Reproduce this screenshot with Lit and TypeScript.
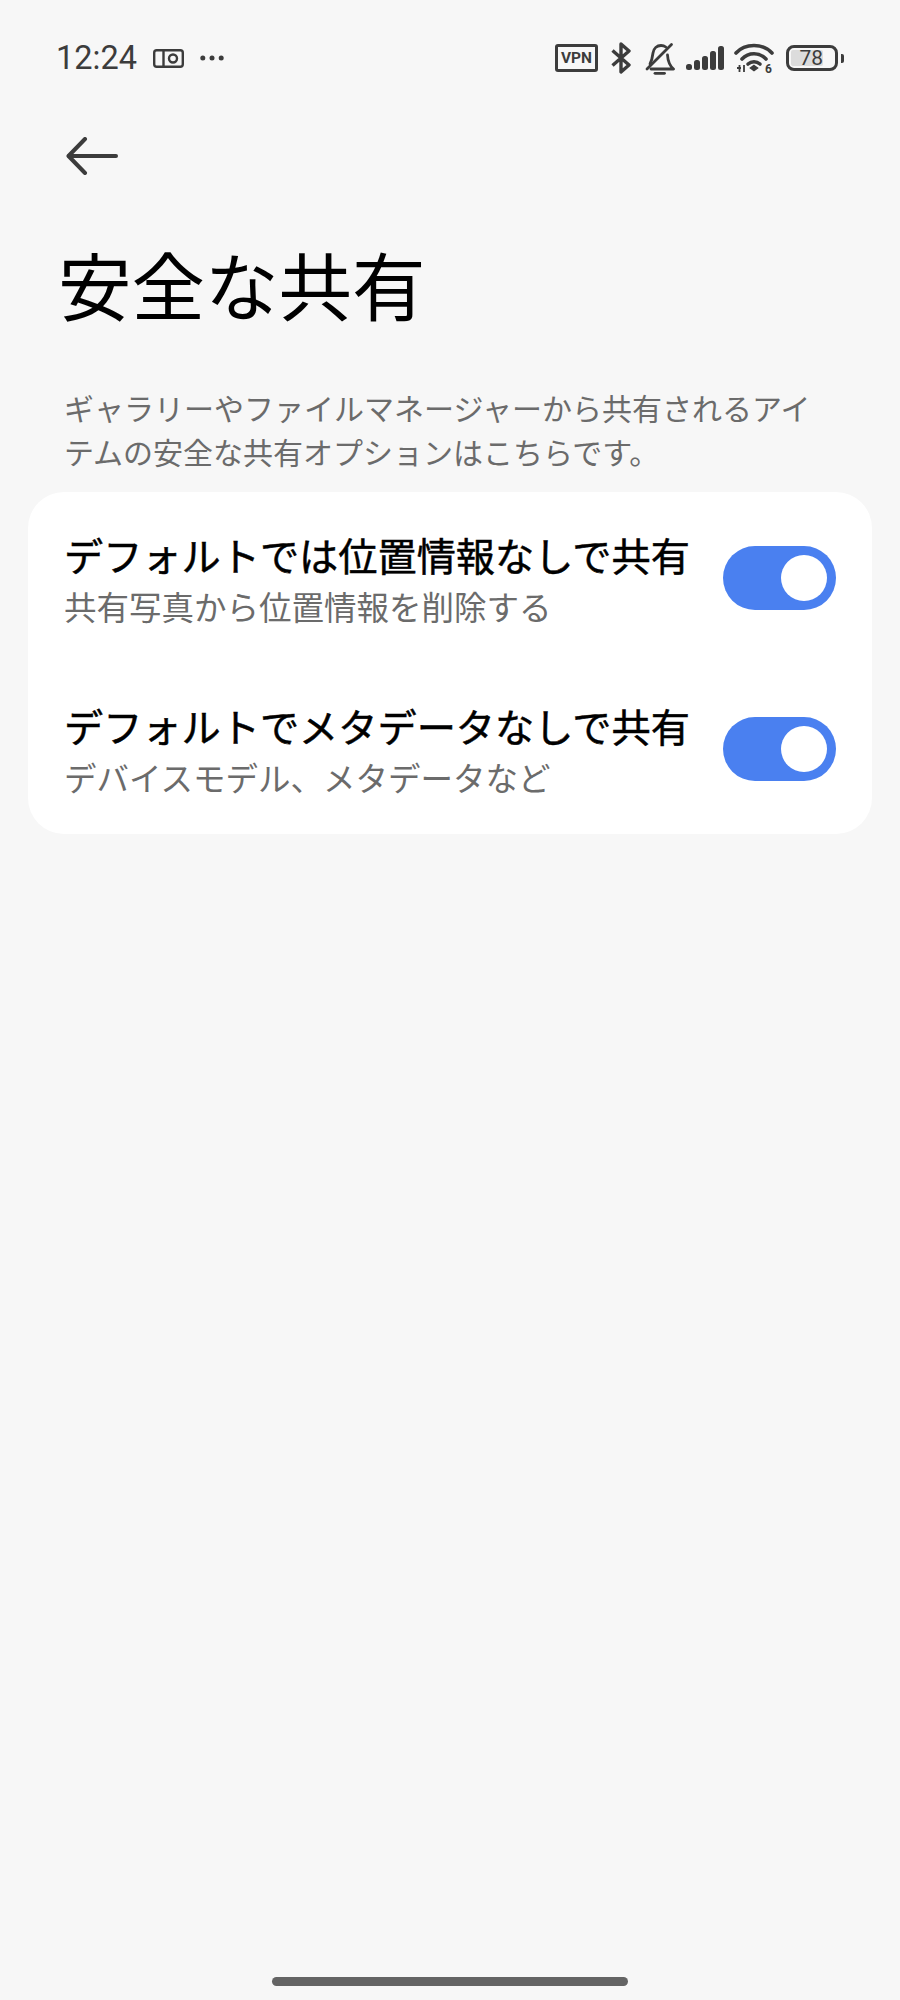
import { LitElement, html, css, svg } from 'lit';
import { customElement } from 'lit/decorators.js';

const rows = [
  { title: 'デフォルトでは位置情報なしで共有', sub: '共有写真から位置情報を削除する' },
  { title: 'デフォルトでメタデータなしで共有', sub: 'デバイスモデル、メタデータなど' }
];

const stroke = '#3c3c3c';

@customElement('app-root')
export class AppRoot extends LitElement {
  static styles = css`
    :host {
      display: block;
      width: 900px;
      height: 2000px;
      background: #f7f7f7;
      font-family: "Noto Sans CJK JP", "Noto Sans", sans-serif;
      overflow: hidden;
    }

    .page {
      display: flex;
      flex-direction: column;
      height: 2000px;
    }

    svg {
      display: block;
      flex: none;
    }

    .status {
      display: flex;
      align-items: center;
      height: 40px;
      margin-top: 38px;
      padding: 0 56px;
      color: #3c3c3c;
    }

    .time {
      font-family: Roboto, sans-serif;
      font-size: 32.5px;
      line-height: 40px;
      width: 97px;
    }

    .cam {
      margin-right: 16px;
    }

    .status-right {
      display: flex;
      align-items: center;
      margin-left: auto;
    }

    .vpn {
      flex: none;
      padding: 0 3px;
      border: 3px solid #3c3c3c;
      border-radius: 3px;
      font-family: Roboto, sans-serif;
      font-size: 15.5px;
      font-weight: 700;
      line-height: 22px;
      margin-right: 13px;
    }

    .bt { margin-right: 13px; }
    .bell { margin-right: 11px; }
    .signal { margin-right: 10px; }
    .wifi { margin-right: 12px; }

    .battery {
      display: flex;
      align-items: center;
      gap: 3px;
    }

    .battery-body {
      box-sizing: border-box;
      width: 52px;
      height: 26px;
      border: 3px solid #3c3c3c;
      border-radius: 8px;
      padding: 2px 12px 2px 2px;
      display: flex;
    }

    .battery-fill {
      flex: 1;
      border-radius: 2px;
      background: #dcdcdc;
      font-family: Roboto, sans-serif;
      font-size: 21px;
      line-height: 16px;
      text-align: right;
    }

    .battery-nub {
      width: 3px;
      height: 9px;
      border-radius: 0 2px 2px 0;
      background: #3c3c3c;
    }

    .back {
      margin: 59px 0 0 66px;
    }

    h1 {
      margin: 55px 0 0 58px;
      font-size: 73.5px;
      font-weight: 400;
      line-height: 106px;
      color: #000;
    }

    .desc {
      margin: 49px 64px 0;
      font-size: 30px;
      line-height: 44px;
      color: #6b6b6b;
    }

    .card {
      margin: 19px 28px 0;
      height: 342px;
      box-sizing: border-box;
      padding: 34px 36px 0;
      background: #fff;
      border-radius: 36px;
    }

    .row {
      display: flex;
      align-items: center;
      justify-content: space-between;
      height: 103px;
      margin-bottom: 68px;
    }

    .row-title {
      font-size: 39.2px;
      -webkit-text-stroke: 0.5px #000;
      line-height: 54px;
      color: #000;
    }

    .row-sub {
      margin-top: 2px;
      font-size: 32.5px;
      line-height: 46px;
      color: #6b6b6b;
    }

    .toggle {
      display: flex;
      justify-content: flex-end;
      align-items: center;
      box-sizing: border-box;
      width: 113px;
      height: 64px;
      padding-right: 9px;
      border-radius: 32px;
      background: #4a80f0;
    }

    .knob {
      width: 46px;
      height: 46px;
      border-radius: 50%;
      background: #fff;
    }

    .home {
      width: 356px;
      height: 9px;
      margin: auto auto 14px;
      border-radius: 5px;
      background: #646464;
    }
  `;

  renderStatus() {
    return html`
      <div class="status">
        <span class="time">12:24</span>
        <svg class="cam" width="31" height="19" viewBox="0 0 31 19" fill="none" stroke=${stroke} stroke-width="2.4">
          <rect x="1.2" y="1.2" width="28.6" height="16.6" rx="2.5"/>
          <path d="M10.5 1.2V17.8"/>
          <circle cx="20" cy="9.5" r="4"/>
        </svg>
        <svg width="24" height="6" viewBox="0 0 24 6" fill=${stroke}>
          <circle cx="2.8" cy="3" r="2.5"/><circle cx="12" cy="3" r="2.5"/><circle cx="21.200" cy="3" r="2.5"/>
        </svg>
        <div class="status-right">
          <span class="vpn">VPN</span>
          <svg class="bt" width="21" height="32" viewBox="0 0 21 32" fill="none" stroke=${stroke} stroke-width="3.4" stroke-linejoin="round">
            <path d="M1.5 8.5 18 23 10 30V2l8 7L1.5 23.5"/>
          </svg>
          <svg class="bell" width="30" height="33" viewBox="0 0 30 33" fill="none" stroke=${stroke} stroke-width="2.8" stroke-linecap="round" stroke-linejoin="round">
            <path d="M5 22c1.800-3.500 2.500-7 3-11 .6-4.500 4-7.500 8-7.500 1.800 0 3.500.5 4.800 1.500"/>
            <path d="M22.500 13c.3 5 2 10.500 6 14H6"/>
            <path d="M10 31.300h9.500"/>
            <path d="M26.500 2.500 2 27"/>
          </svg>
          <svg class="signal" width="38" height="24" viewBox="0 0 38 24" fill=${stroke}>
            <rect x="0" y="18" width="6" height="6" rx="2.500"/>
            <rect x="8" y="14" width="6" height="10" rx="2.500"/>
            <rect x="16" y="10" width="6" height="14" rx="2.500"/>
            <rect x="24" y="5" width="6" height="19" rx="2.500"/>
            <rect x="32" y="0" width="6" height="24" rx="2.500"/>
          </svg>
          <svg class="wifi" width="40" height="30" viewBox="0 0 40 30" fill="none" stroke=${stroke} stroke-width="3.600" stroke-linecap="round">
            <path d="M2 10C11 0 29 0 38 10"/>
            <path d="M8 16c6.500-7 17.500-7 24 0"/>
            <path d="M14 21c3.500-3 8.500-3 12 0"/>
            <path d="M20 22.500l3.500 2.500-3.500 2.500-3.500-2.500z" fill=${stroke} stroke-width="1.500"/>
            <path d="M3 25h4M5.500 22v7M10 22v7" stroke-width="1.800" stroke-linecap="butt"/>
            ${svg`<text x="31" y="30" font-family="Roboto, sans-serif" font-size="12" font-weight="700" fill=${stroke} stroke="none">6</text>`}
          </svg>
          <div class="battery">
            <div class="battery-body"><div class="battery-fill">78</div></div>
            <div class="battery-nub"></div>
          </div>
        </div>
      </div>
    `;
  }

  render() {
    return html`
      <div class="page">
        ${this.renderStatus()}
        <svg class="back" width="52" height="38" viewBox="0 0 52 38" fill="none" stroke=${stroke} stroke-width="4" stroke-linecap="round" stroke-linejoin="round">
          <path d="M50 19H3"/>
          <path d="M19 2 2.500 19 19 36"/>
        </svg>
        <h1>安全な共有</h1>
        <p class="desc">ギャラリーやファイルマネージャーから共有されるアイテムの安全な共有オプションはこちらです。</p>
        <div class="card">
          ${rows.map(r => html`
            <div class="row">
              <div>
                <div class="row-title">${r.title}</div>
                <div class="row-sub">${r.sub}</div>
              </div>
              <div class="toggle"><div class="knob"></div></div>
            </div>
          `)}
        </div>
        <div class="home"></div>
      </div>
    `;
  }
}
